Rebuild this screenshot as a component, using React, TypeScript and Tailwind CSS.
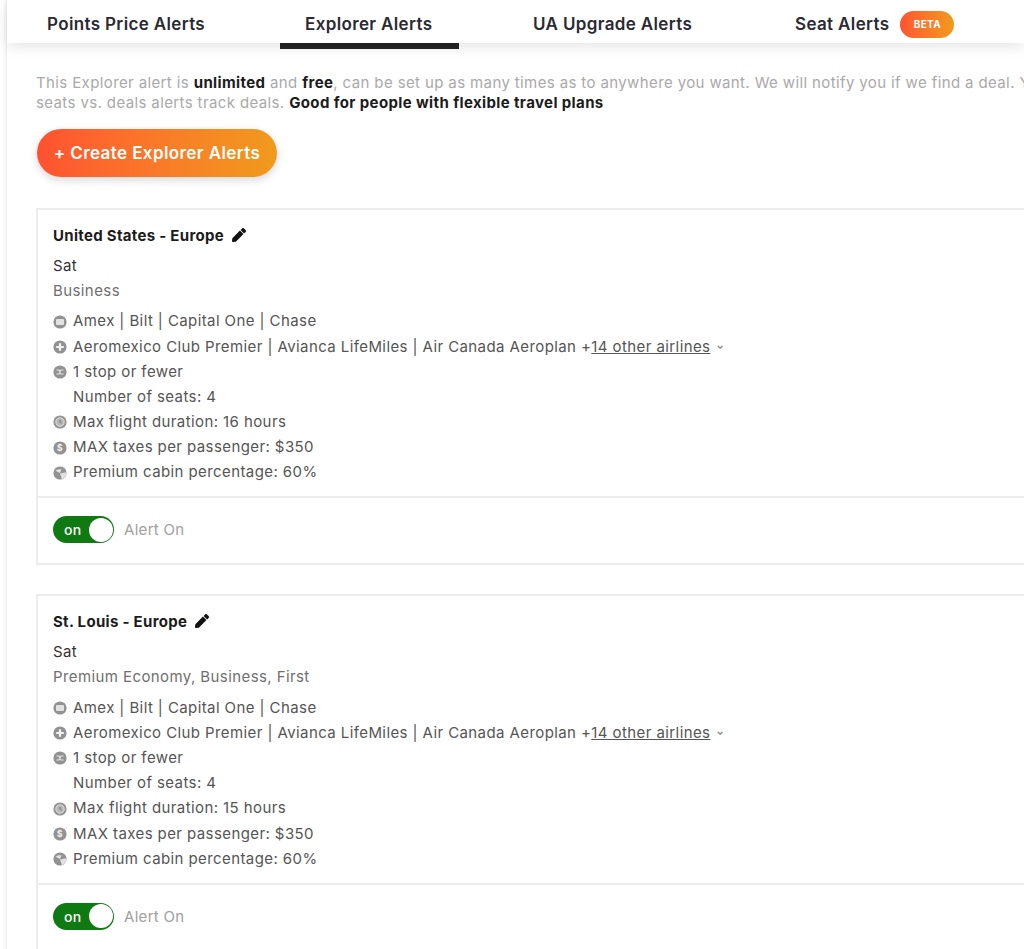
import React from "react";
import { FaPen } from "react-icons/fa";

const grad = "bg-gradient-to-r from-[#ff5130] to-[#f09a1c]";

type IconKind = "card" | "plus" | "stop" | "clock" | "dollar" | "pie";

function RowIcon({ kind }: { kind: IconKind }) {
  return (
    <svg width="14" height="14" viewBox="0 0 14 14" className="shrink-0">
      <circle cx="7" cy="7" r="6.6" fill="#929292" />
      {kind === "card" && <rect x="3" y="4" width="8" height="6" rx="1" fill="#e2e2e2" />}
      {kind === "plus" && <path d="M7 3.2v7.6M3.2 7h7.6" stroke="#f2f2f2" strokeWidth="2.2" />}
      {kind === "stop" && <path d="M3.5 5h2.5l2 4h2.5M3.5 9h2.5l2-4h2.5" stroke="#e6e6e6" strokeWidth="1.1" fill="none" />}
      {kind === "clock" && (
        <>
          <circle cx="7" cy="7" r="4.2" fill="#b5b5b5" stroke="#e6e6e6" strokeWidth="1" />
          <path d="M7 4.8V7l1.6 1" stroke="#777" strokeWidth="1" fill="none" />
        </>
      )}
      {kind === "dollar" && (
        <text x="7" y="10.2" textAnchor="middle" fontSize="9" fontWeight="700" fill="#eee" fontFamily="Inter, sans-serif">$</text>
      )}
      {kind === "pie" && <path d="M7 7.5l6.4-1.2A6.6 6.6 0 0 1 9 13.2z M2.5 4.8C4 3.2 6.5 2.8 8.5 3.6L7 7z" fill="#e2e2e2" />}
    </svg>
  );
}

function Row({ kind, children }: { kind?: IconKind; children: React.ReactNode }) {
  return (
    <div className="flex items-center h-[25.2px] gap-[6px]">
      {kind ? <RowIcon kind={kind} /> : <span className="w-[14px] shrink-0" />}
      <span className="whitespace-nowrap">{children}</span>
    </div>
  );
}

function AlertCard({ title, cabin, hours }: { title: string; cabin: string; hours: number }) {
  return (
    <section className="w-[1040px] border-2 border-[#ececec] bg-white">
      <div className="px-[15px] pt-[15px] pb-[11px]">
        <div className="flex items-center gap-[8px] h-[22px] text-[15px] font-bold text-[#1c1c1c] tracking-[0.3px]">
          {title}
          <FaPen className="text-[14px] text-[#111] -translate-y-px" />
        </div>
        <div className="mt-[6px] h-[25px] leading-[25px] text-[#333]">Sat</div>
        <div className="h-[25px] leading-[25px] text-[#6f6f6f]">{cabin}</div>
        <div className="mt-[6px] text-[#555555]">
          <Row kind="card">Amex | Bilt | Capital One | Chase</Row>
          <Row kind="plus">
            Aeromexico Club Premier | Avianca LifeMiles | Air Canada Aeroplan +
            <span className="underline">14 other airlines</span>
            <span className="relative -top-[3px] ml-[6px] inline-block text-[9px] font-bold text-[#777]">⌄</span>
          </Row>
          <Row kind="stop">1 stop or fewer</Row>
          <Row>Number of seats: 4</Row>
          <Row kind="clock">Max flight duration: {hours} hours</Row>
          <Row kind="dollar">MAX taxes per passenger: $350</Row>
          <Row kind="pie">Premium cabin percentage: 60%</Row>
        </div>
      </div>
      <div className="flex items-start gap-[10px] border-t-2 border-[#ececec] px-[15px] pt-[18px] h-[67px]">
        <div className="flex items-center justify-between w-[61px] h-[27px] rounded-full bg-[#0f7a12] pl-[11px] pr-[1.5px]">
          <span className="text-white text-[14px] font-medium">on</span>
          <span className="w-[24px] h-[24px] rounded-full bg-white" />
        </div>
        <span className="text-[15px] leading-[27px] text-[#a0a0a0] tracking-[0.3px]">Alert On</span>
      </div>
    </section>
  );
}

export default function App() {
  return (
    <div className="h-[949px] w-[1024px] overflow-hidden bg-white font-['Inter','Liberation_Sans',sans-serif] text-[15px] tracking-[0.41px]">
      <div className="ml-[6px] h-full border-l border-[#eeeeee] shadow-[-2px_0_3px_rgba(0,0,0,0.04)]">
        <nav className="relative flex h-[43px] items-center pt-[6px] shadow-[0_4px_14px_rgba(0,0,0,0.1)] text-[17px] font-semibold text-[#2a2a33] tracking-[0.36px]">
          <span className="ml-[40px] w-[258px] whitespace-nowrap">Points Price Alerts</span>
          <span className="w-[228px] whitespace-nowrap">Explorer Alerts</span>
          <span className="w-[262px] whitespace-nowrap">UA Upgrade Alerts</span>
          <span className="flex items-center gap-[11px] whitespace-nowrap">
            Seat Alerts
            <span className={`-mt-[1px] flex h-[27px] w-[54px] items-center justify-center rounded-full text-[10px] font-bold text-white ${grad}`}>BETA</span>
          </span>
          <span className="absolute left-[273px] top-[43px] h-[6px] w-[179px] bg-[#222]" />
        </nav>
        <main className="px-[29px]">
          <p className="mt-[30px] w-[1100px] leading-[20px] text-[#a9a9a9] tracking-[0.38px]">
            This Explorer alert is <b className="font-bold text-[#1c1c1c]">unlimited</b> and <b className="font-bold text-[#1c1c1c]">free</b>, can be set up as many times as to anywhere you want. We will notify you if we find a deal. Y
            <br />
            seats vs. deals alerts track deals. <b className="font-bold text-[#1c1c1c]">Good for people with flexible travel plans</b>
          </p>
          <button className={`ml-px mt-[16px] block h-[48px] w-[240px] rounded-full pt-[2px] text-[17px] font-semibold text-white shadow-[0_3px_8px_rgba(0,0,0,0.16)] ${grad}`}>
            + Create Explorer Alerts
          </button>
          <div className="mt-[31px] flex flex-col gap-[29px]">
            <AlertCard title="United States - Europe" cabin="Business" hours={16} />
            <AlertCard title="St. Louis - Europe" cabin="Premium Economy, Business, First" hours={15} />
          </div>
        </main>
      </div>
    </div>
  );
}
